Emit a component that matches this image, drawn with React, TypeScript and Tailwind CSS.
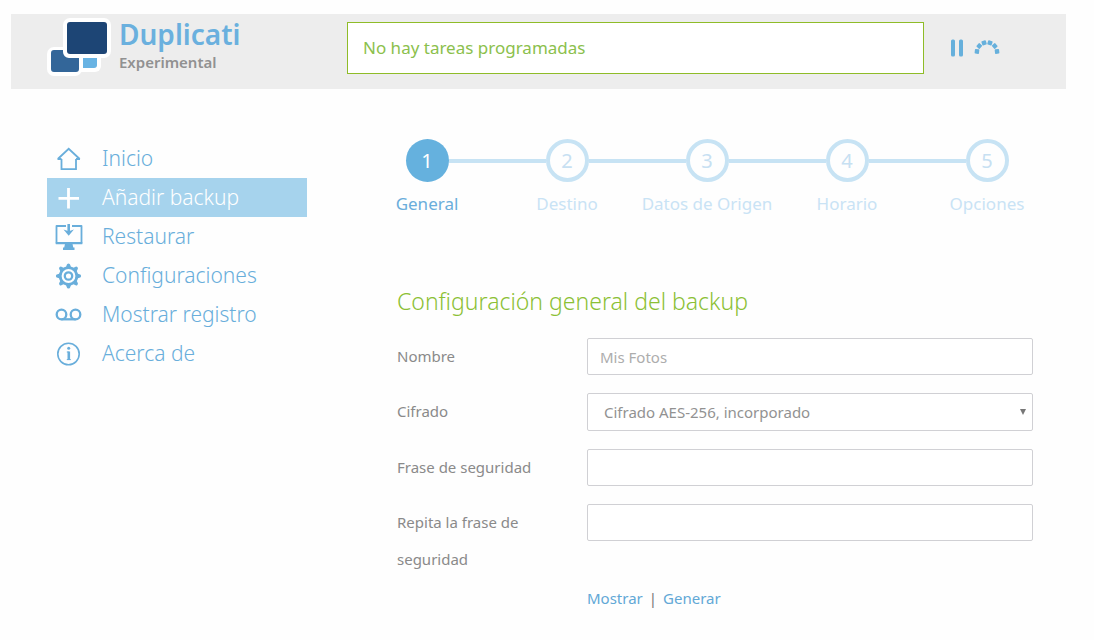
import React, { useState } from "react";

const Logo = () => (
  <svg width="64" height="60" viewBox="0 0 64 60" aria-hidden="true">
    <g fill="#fff">
      <rect x="27" y="30" width="27" height="26" rx="6" />
      <rect x="0" y="31" width="35" height="29" rx="7" />
      <rect x="16" y="2" width="48" height="40" rx="7" />
    </g>
    <path d="M36 42h14v7a3 3 0 0 1-3 3H36z" fill="#68b3e3" />
    <path d="M7 34h9v2a6 6 0 0 0 6 6h10v11a3 3 0 0 1-3 3H7a3 3 0 0 1-3-3V37a3 3 0 0 1 3-3z" fill="#336699" />
    <rect x="20" y="6" width="40" height="32" rx="3" fill="#1d4575" />
  </svg>
);

const HomeIcon = () => (
  <svg width="28" height="28" viewBox="0 0 28 28" fill="none" stroke="currentColor" strokeWidth="1.800" aria-hidden="true">
    <path d="M6.500 14v10.200h14.500V14" />
    <path d="M2.500 14h4M21 14h4M2.800 14 13.700 3.800 24.700 14" />
  </svg>
);

const PlusIcon = () => (
  <svg width="28" height="28" viewBox="0 0 28 28" fill="none" stroke="currentColor" strokeWidth="2.800" aria-hidden="true">
    <path d="M13.500 4v20.500M3.500 14.300h20.500" />
  </svg>
);

const RestoreIcon = () => (
  <svg width="28" height="28" viewBox="0 0 28 28" fill="none" stroke="currentColor" strokeWidth="1.800" aria-hidden="true">
    <path d="M11 3H1.500v17h25V3H17" strokeLinejoin="round" />
    <path d="M13.700 1v8" strokeWidth="2.600" />
    <path d="M8.500 6.500 13.700 12.800 18.900 6.500l-5.200 1.800z" fill="currentColor" stroke="none" />
    <path d="M.8 19h26.500v2.200H.8zM10 21h7.500l.8 3.500h1.200V27h-11.500v-2.500h1.200z" fill="currentColor" stroke="none" />
  </svg>
);

const GearIcon = () => (
  <svg width="28" height="28" viewBox="0 0 28 28" fill="none" stroke="currentColor" aria-hidden="true">
    <circle cx="13.500" cy="14" r="8.300" strokeWidth="2.800" />
    <circle cx="13.500" cy="14" r="3.700" strokeWidth="2.300" />
    <g fill="currentColor" stroke="none">
      {[0, 45, 90, 135, 180, 225, 270, 315].map((a) => (
        <path key={a} d="M10 5.500Q11.500 5 11.700 3Q12 1.400 13.500 1.400T15.300 3Q15.500 5 17 5.500z" transform={`rotate(${a} 13.500 14)`} />
      ))}
    </g>
  </svg>
);

const TapeIcon = () => (
  <svg width="28" height="28" viewBox="0 0 28 28" fill="none" stroke="currentColor" strokeWidth="2.300" aria-hidden="true">
    <circle cx="6.500" cy="13.500" r="4.800" />
    <circle cx="20.500" cy="13.500" r="4.800" />
    <path d="M6.500 18.300h14" />
  </svg>
);

const InfoIcon = () => (
  <svg width="28" height="28" viewBox="0 0 28 28" fill="none" stroke="currentColor" aria-hidden="true">
    <circle cx="13.500" cy="14" r="10.700" strokeWidth="1.600" />
    <path d="M13.800 11.500v8.500" strokeWidth="2.600" />
    <path d="M11.800 12h2M11.800 19.600h4" strokeWidth="1" />
    <circle cx="13.700" cy="8.300" r="1.500" fill="currentColor" stroke="none" />
  </svg>
);

const PauseIcon = () => (
  <svg width="13" height="18" viewBox="0 0 13 18" fill="currentColor" aria-hidden="true">
    <rect x="1" y="0.500" width="4" height="17" rx="1.500" />
    <rect x="9" y="0.500" width="4" height="17" rx="1.500" />
  </svg>
);

const ThrottleIcon = () => (
  <svg width="28" height="18" viewBox="0 0 28 18" fill="currentColor" aria-hidden="true">
    {[-84, -50, -17, 17, 50, 84].map((a) => (
      <rect key={a} x="11.700" y="1.200" width="4.600" height="4.400" rx="0.800" transform={`rotate(${a} 14 13.500)`} />
    ))}
  </svg>
);

const menu = [
  { label: "Inicio", Icon: HomeIcon },
  { label: "Añadir backup", Icon: PlusIcon, active: true },
  { label: "Restaurar", Icon: RestoreIcon },
  { label: "Configuraciones", Icon: GearIcon },
  { label: "Mostrar registro", Icon: TapeIcon },
  { label: "Acerca de", Icon: InfoIcon },
];

const steps = ["General", "Destino", "Datos de Origen", "Horario", "Opciones"];

const field = "block h-[37px] w-full rounded-xs border border-[#d0d0d4] bg-white px-3 text-[15px] text-[#929292] outline-none placeholder:text-[#adadad]";
const label = "w-[150px] text-[15px] leading-[37px] text-[#8a8a8a]";

function Stepper() {
  return (
    <ol className="grid grid-cols-5">
      {steps.map((name, i) => (
        <li key={name}>
          <button type="button" className="flex w-full flex-col items-center">
            <span className="flex w-full items-center">
              <span className={i === 0 ? "h-1 flex-1" : "h-1 flex-1 bg-[#c7e3f4]"} />
              <span
                className={
                  i === 0
                    ? "flex size-[43px] items-center justify-center rounded-full bg-[#65b1de] text-xl text-white"
                    : "flex size-[43px] items-center justify-center rounded-full border-4 border-[#c7e3f4] text-xl text-[#c7e0f2]"
                }
              >
                {i + 1}
              </span>
              <span className={i === steps.length - 1 ? "h-1 flex-1" : "h-1 flex-1 bg-[#c7e3f4]"} />
            </span>
            <span className={i === 0 ? "mt-2 text-[17px] leading-7 text-[#6aaddb]" : "mt-2 text-[17px] leading-7 whitespace-nowrap text-[#c9e3f5]"}>
              {name}
            </span>
          </button>
        </li>
      ))}
    </ol>
  );
}

export default function App() {
  const [visible, setVisible] = useState(false);
  const type = visible ? "text" : "password";
  return (
    <div className="min-h-screen bg-[#fefefe] pt-3.5 pr-7 pl-[11px] font-['Noto_Sans',sans-serif]">
      <header className="flex items-start bg-[#ededed] pb-[13px]">
        <div className="flex w-[336px] shrink-0 gap-2 pl-9">
          <div className="pt-0.5">
            <Logo />
          </div>
          <div className="pt-0.5">
            <h1 className="text-[28px] leading-9 font-semibold text-[#6ab0de]">Duplicati</h1>
            <p className="text-[15px] leading-5 font-semibold text-[#919191]">Experimental</p>
          </div>
        </div>
        <div className="mt-2 flex h-[52px] flex-1 items-center border border-[#8fbc28] bg-white px-[15px] text-[17px] text-[#8bc04c]">
          No hay tareas programadas
        </div>
        <div className="flex w-[142px] shrink-0 items-center gap-2.5 pt-[25px] pl-[26px] text-[#66b0dc]">
          <button type="button" aria-label="Pausar">
            <PauseIcon />
          </button>
          <button type="button" aria-label="Limitar velocidad">
            <ThrottleIcon />
          </button>
        </div>
      </header>

      <div className="flex items-start pr-[9px] pl-9 pt-[50px]">
        <nav className="w-[260px] shrink-0">
          <ul>
            {menu.map(({ label: text, Icon, active }) => (
              <li key={text}>
                <a
                  href="#"
                  className={
                    active
                      ? "flex h-[39px] items-center gap-[19px] bg-[#a6d3ed] pl-2 text-[21px] font-light text-white"
                      : "flex h-[39px] items-center gap-[19px] pl-2 text-[21px] font-light text-[#69aedb]"
                  }
                >
                  <Icon />
                  {text}
                </a>
              </li>
            ))}
          </ul>
        </nav>

        <main className="ml-[50px] flex-1">
          <Stepper />
          <form className="mt-[67px] pr-6 pl-10" onSubmit={(e) => e.preventDefault()}>
            <h2 className="text-[23px] leading-8 font-light text-[#8bc034]">Configuración general del backup</h2>
            <div className="mt-[21px] grid grid-cols-[190px_1fr] gap-y-[18px]">
              <label htmlFor="name" className={label}>Nombre</label>
              <div>
                <input id="name" placeholder="Mis Fotos" className={field} />
              </div>

              <label htmlFor="encryption" className={label}>Cifrado</label>
              <div className="relative">
                <select
                  id="encryption"
                  className="block h-[38px] w-full appearance-none rounded-xs border border-[#d0d0d4] bg-white px-4 text-[15px] text-[#929292] outline-none"
                >
                  <option>Cifrado AES-256, incorporado</option>
                </select>
                <svg width="6" height="6" viewBox="0 0 6 6" className="pointer-events-none absolute top-4 right-[7px]" aria-hidden="true">
                  <path d="M0 0h6L3 6z" fill="#777" />
                </svg>
              </div>

              <label htmlFor="pass" className={label}>Frase de seguridad</label>
              <div>
                <input id="pass" type={type} className={field} />
              </div>

              <label htmlFor="repeat" className={label}>Repita la frase de seguridad</label>
              <div>
                <input id="repeat" type={type} className={field} />
              </div>
            </div>
            <div className="mt-2 flex gap-1.5 pl-[190px] text-[15px] leading-6 text-[#777]">
              <a
                href="#"
                className="text-[#62a8d6]"
                onClick={(e) => {
                  e.preventDefault();
                  setVisible(!visible);
                }}
              >
                Mostrar
              </a>
              <span>|</span>
              <a href="#" className="text-[#62a8d6]">Generar</a>
            </div>
          </form>
        </main>
      </div>
    </div>
  );
}
